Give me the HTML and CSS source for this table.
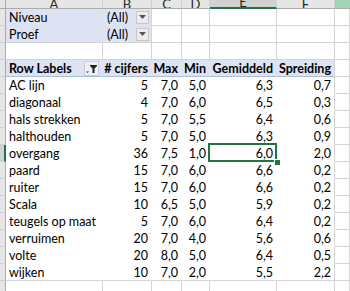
FILE: index.html
```html
<!DOCTYPE html>
<html>
<head>
<meta charset="utf-8">
<link rel="stylesheet" href="styles.css">
</head>
<body>
<div class="sheet">
  <div class="row colhead">
    <div class="rh corner"></div>
    <div class="ch"><span>A</span></div>
    <div class="ch"><span>B</span></div>
    <div class="ch"><span>C</span></div>
    <div class="ch"><span>D</span></div>
    <div class="ch sel"><span>E</span></div>
    <div class="ch"><span>F</span></div>
    <div class="ch g"></div>
  </div>

  <div class="row">
    <div class="rh"></div>
    <div class="c f fa">Niveau</div>
    <div class="c f fb"><span>(All)</span><span class="dd"><svg width="7" height="4" viewBox="0 0 7 4"><path d="M0 0H7L3.5 4Z" fill="#555"/></svg></span></div>
    <div class="c"></div><div class="c"></div><div class="c"></div><div class="c"></div><div class="c"></div>
  </div>
  <div class="row">
    <div class="rh"></div>
    <div class="c f fa fl">Proef</div>
    <div class="c f fb fl"><span>(All)</span><span class="dd"><svg width="7" height="4" viewBox="0 0 7 4"><path d="M0 0H7L3.5 4Z" fill="#555"/></svg></span></div>
    <div class="c"></div><div class="c"></div><div class="c"></div><div class="c"></div><div class="c"></div>
  </div>
  <div class="row">
    <div class="rh"></div>
    <div class="c"></div><div class="c"></div><div class="c"></div><div class="c"></div><div class="c"></div><div class="c"></div><div class="c"></div>
  </div>

  <div class="row">
    <div class="rh"></div>
    <div class="c h"><span>Row Labels</span><span class="fbtn"><svg width="13" height="11" viewBox="0 0 13 11"><path d="M1 8.5H4L2.5 10Z" fill="#333"/><path d="M5 2H12V3L9.5 5.5V10H7.5V5.5L5 3Z" fill="#222"/></svg></span></div>
    <div class="c h n">#&nbsp;cijfers</div>
    <div class="c h n">Max</div>
    <div class="c h n">Min</div>
    <div class="c h n">Gemiddeld</div>
    <div class="c h n">Spreiding</div>
    <div class="c"></div>
  </div>

  <div class="row"><div class="rh"></div><div class="c d">AC lijn</div><div class="c d n">5</div><div class="c d n">7,0</div><div class="c d n">5,0</div><div class="c d n">6,3</div><div class="c d n">0,7</div><div class="c"></div></div>
  <div class="row"><div class="rh"></div><div class="c d">diagonaal</div><div class="c d n">4</div><div class="c d n">7,0</div><div class="c d n">6,0</div><div class="c d n">6,5</div><div class="c d n">0,3</div><div class="c"></div></div>
  <div class="row"><div class="rh"></div><div class="c d">hals strekken</div><div class="c d n">5</div><div class="c d n">7,0</div><div class="c d n">5,5</div><div class="c d n">6,4</div><div class="c d n">0,6</div><div class="c"></div></div>
  <div class="row"><div class="rh"></div><div class="c d">halthouden</div><div class="c d n">5</div><div class="c d n">7,0</div><div class="c d n">5,0</div><div class="c d n">6,3</div><div class="c d n">0,9</div><div class="c"></div></div>
  <div class="row"><div class="rh act"></div><div class="c d">overgang</div><div class="c d n">36</div><div class="c d n">7,5</div><div class="c d n">1,0</div><div class="c d n cur">6,0</div><div class="c d n">2,0</div><div class="c"></div></div>
  <div class="row"><div class="rh"></div><div class="c d">paard</div><div class="c d n">15</div><div class="c d n">7,0</div><div class="c d n">6,0</div><div class="c d n">6,6</div><div class="c d n">0,2</div><div class="c"></div></div>
  <div class="row"><div class="rh"></div><div class="c d">ruiter</div><div class="c d n">15</div><div class="c d n">7,0</div><div class="c d n">6,0</div><div class="c d n">6,6</div><div class="c d n">0,2</div><div class="c"></div></div>
  <div class="row"><div class="rh"></div><div class="c d">Scala</div><div class="c d n">10</div><div class="c d n">6,5</div><div class="c d n">5,0</div><div class="c d n">5,9</div><div class="c d n">0,2</div><div class="c"></div></div>
  <div class="row"><div class="rh"></div><div class="c d">teugels op maat</div><div class="c d n">5</div><div class="c d n">7,0</div><div class="c d n">6,0</div><div class="c d n">6,4</div><div class="c d n">0,2</div><div class="c"></div></div>
  <div class="row"><div class="rh"></div><div class="c d">verruimen</div><div class="c d n">20</div><div class="c d n">7,0</div><div class="c d n">4,0</div><div class="c d n">5,6</div><div class="c d n">0,6</div><div class="c"></div></div>
  <div class="row"><div class="rh"></div><div class="c d">volte</div><div class="c d n">20</div><div class="c d n">8,0</div><div class="c d n">5,0</div><div class="c d n">6,4</div><div class="c d n">0,5</div><div class="c"></div></div>
  <div class="row"><div class="rh"></div><div class="c d last">wijken</div><div class="c d n last">10</div><div class="c d n last">7,0</div><div class="c d n last">2,0</div><div class="c d n last">5,5</div><div class="c d n last">2,2</div><div class="c"></div></div>

  <div class="row">
    <div class="rh"></div>
    <div class="c"></div><div class="c"></div><div class="c"></div><div class="c"></div><div class="c"></div><div class="c"></div><div class="c"></div>
  </div>
</div>
</body>
</html>
```

FILE: styles.css
```css
* { box-sizing: border-box; }
html, body { margin: 0; padding: 0; background: #fff; }
body {
  font-family: Lato, "Liberation Sans", sans-serif;
  font-size: 12.5px;
  color: #000;
  width: 350px;
  height: 291px;
  overflow: hidden;
}
.sheet { width: 350px; }
.row {
  display: grid;
  grid-template-columns: 6px 97px 49px 30px 28px 67px 58px 15px;
  height: 17px;
}
.row.colhead { height: 9px; }

.rh {
  background: #e6e6e6;
  border-right: 1px solid #ababab;
  border-bottom: 1px solid #d0d0d0;
}
.rh.corner { border-bottom: 1px solid #ababab; }
.rh.act {
  background: #d2d2d2;
  border-right: 2px solid #217346;
}

.ch {
  background: #e6e6e6;
  border-right: 1px solid #d0d0d0;
  border-bottom: 1px solid #ababab;
  overflow: hidden;
  display: flex;
  justify-content: center;
  align-items: flex-end;
  color: #262626;
  font-size: 13px;
}
.ch span { line-height: 13px; margin-bottom: -3px; }
.ch.sel {
  background: #d2d2d2;
  border-bottom: 2px solid #217346;
}
.ch.sel span { margin-bottom: -2px; }
.ch.g { background: #9fd5b7; border-right: none; }

.c {
  border-right: 1px solid #d4d4d4;
  border-bottom: 1px solid #d4d4d4;
  display: flex;
  align-items: flex-end;
  white-space: nowrap;
  line-height: 15px;
  padding: 0 3px 0 3px;
}

.f { background: #dde3f2; }
.f.fa { border-right-color: #dde3f2; border-bottom-color: #dde3f2; }
.f.fb { border-bottom-color: #dde3f2; justify-content: flex-end; padding-right: 2px; align-items: center; }
.f.fa.fl { border-bottom-color: #d4d4d4; }
.f.fb.fl { border-bottom-color: #d4d4d4; }
.fb > span:first-child { margin-right: 8px; margin-top: 1px; }
.dd {
  width: 13px;
  height: 13px;
  background: #ececec;
  border: 1px solid #c8c8c8;
  display: flex;
  align-items: center;
  justify-content: center;
}

.h {
  background: #dde3f2;
  font-weight: bold;
  border-right-color: #dde3f2;
  border-bottom-color: #a9bde3;
}
.h:nth-child(7) { border-right-color: #d4d4d4; }
.h.n { justify-content: flex-end; }
.h .fbtn {
  margin-left: auto;
  margin-right: 0;
  width: 15px;
  height: 15px;
  align-self: center;
  background: #eef1f8;
  border: 1px solid #c6cede;
  display: flex;
  align-items: center;
  justify-content: center;
}

.d {
  background: #fff;
  border-right-color: #fff;
  border-bottom-color: #fff;
}
.d.n { justify-content: flex-end; }
.d:nth-child(7) { border-right-color: #d4d4d4; }
.d.last { border-bottom-color: #d4d4d4; }

.cur { position: relative; }
.cur::after {
  content: "";
  position: absolute;
  left: -2px;
  top: -2px;
  right: -1px;
  bottom: -1px;
  border: 2px solid #217346;
}
.cur::before {
  content: "";
  position: absolute;
  right: -4px;
  bottom: -4px;
  width: 5px;
  height: 5px;
  background: #217346;
  outline: 1px solid #fff;
  z-index: 2;
}
```
